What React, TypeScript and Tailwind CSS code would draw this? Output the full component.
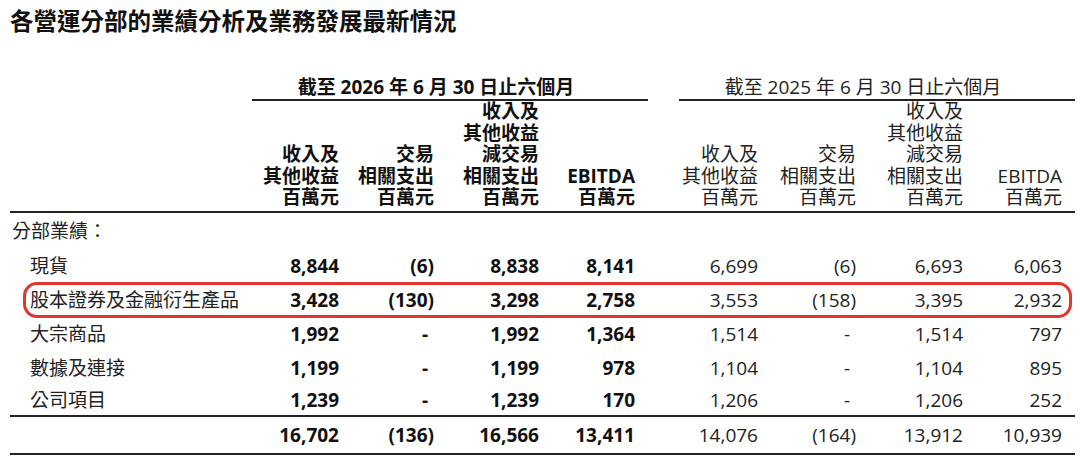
const FONT = "font-['Open_Sans','Noto_Sans_CJK_TC',sans-serif]";

const HEADS: string[][] = [
  ['收入及', '其他收益', '百萬元'],
  ['交易', '相關支出', '百萬元'],
  ['收入及', '其他收益', '減交易', '相關支出', '百萬元'],
  ['EBITDA', '百萬元'],
];

const ROWS: { label: string; v: string[] }[] = [
  { label: '現貨', v: ['8,844', '(6)', '8,838', '8,141', '6,699', '(6)', '6,693', '6,063'] },
  { label: '股本證券及金融衍生產品', v: ['3,428', '(130)', '3,298', '2,758', '3,553', '(158)', '3,395', '2,932'] },
  { label: '大宗商品', v: ['1,992', '-', '1,992', '1,364', '1,514', '-', '1,514', '797'] },
  { label: '數據及連接', v: ['1,199', '-', '1,199', '978', '1,104', '-', '1,104', '895'] },
  { label: '公司項目', v: ['1,239', '-', '1,239', '170', '1,206', '-', '1,206', '252'] },
];

const TOTAL = ['16,702', '(136)', '16,566', '13,411', '14,076', '(164)', '13,912', '10,939'];

// row heights, last data row carries the rule under it
const HEIGHTS = ['h-[34px]', 'h-[34px]', 'h-[34px]', 'h-[34px]', 'h-[32px]'];

function Num({ value, bold, cls }: { value: string; bold: boolean; cls: string }) {
  return (
    <div className={`flex items-center justify-end pr-[13px] ${bold ? 'font-bold text-[#111]' : 'text-[#222]'} ${cls}`}>
      {value === '-' ? <span className="pr-[6px]">-</span> : value}
    </div>
  );
}

function ValueCells({ vals, cls }: { vals: string[]; cls: string }) {
  return (
    <>
      {vals.slice(0, 4).map((v, i) => (
        <Num key={`a${i}`} value={v} bold cls={cls} />
      ))}
      <div className={cls} />
      {vals.slice(4).map((v, i) => (
        <Num key={`b${i}`} value={v} bold={false} cls={cls} />
      ))}
    </>
  );
}

function HeadCell({ lines, bold }: { lines: string[]; bold: boolean }) {
  return (
    <div className={`flex flex-col items-end justify-end pr-[13px] pb-[2.5px] leading-[21.5px] border-b-2 border-[#222] ${bold ? 'font-bold text-[#111]' : 'text-[#222]'}`}>
      {lines.map((l, i) => (
        <div key={i}>{l}</div>
      ))}
    </div>
  );
}

export default function App() {
  return (
    <div className={`relative w-[1080px] h-[463px] overflow-hidden bg-white text-[#1a1a1a] ${FONT}`}>
      <div className="pl-[10px]">
        <h1 className="pt-[6px] text-[23.5px] leading-[30px] font-bold text-[#111]">
          各營運分部的業績分析及業務發展最新情況
        </h1>

        <div className="mt-[39px] grid w-[1065px] grid-cols-[242px_100px_95px_105px_96px_31px_92px_98px_107px_99px] text-[19px]">
          {/* period headers */}
          <div />
          <div className="col-span-4 border-b-2 border-[#222] pr-[28px] text-center leading-[24px] font-bold text-[#111]">
            截至 2026 年 6 月 30 日止六個月
          </div>
          <div />
          <div className="col-span-4 border-b-2 border-[#222] pr-[28px] text-center leading-[24px] text-[#222]">
            截至 2025 年 6 月 30 日止六個月
          </div>

          {/* column headers */}
          <div className="border-b-2 border-[#222]" />
          {HEADS.map((h, i) => (
            <HeadCell key={`h26${i}`} lines={h} bold />
          ))}
          <div className="border-b-2 border-[#222]" />
          {HEADS.map((h, i) => (
            <HeadCell key={`h25${i}`} lines={h} bold={false} />
          ))}

          {/* section label */}
          <div className="col-span-10 flex h-[36px] items-center pl-[2px] text-[#222]">分部業績：</div>

          {ROWS.map((r, idx) => {
            const cls = idx === ROWS.length - 1 ? `${HEIGHTS[idx]} border-b-2 border-[#222]` : HEIGHTS[idx];
            return (
              <div key={r.label} className="contents">
                <div className={`flex items-center pl-[20px] text-[#222] ${cls}`}>{r.label}</div>
                <ValueCells vals={r.v} cls={cls} />
              </div>
            );
          })}

          {/* total */}
          <div className="h-[38px] border-b-2 border-[#222]" />
          <ValueCells vals={TOTAL} cls="h-[38px] border-b-2 border-[#222]" />
        </div>
      </div>

      {/* highlight around equities row */}
      <div className="absolute left-[23px] top-[282px] h-[36px] w-[1049px] rounded-[14px] border-[3px] border-[#e3342f]" />
    </div>
  );
}
